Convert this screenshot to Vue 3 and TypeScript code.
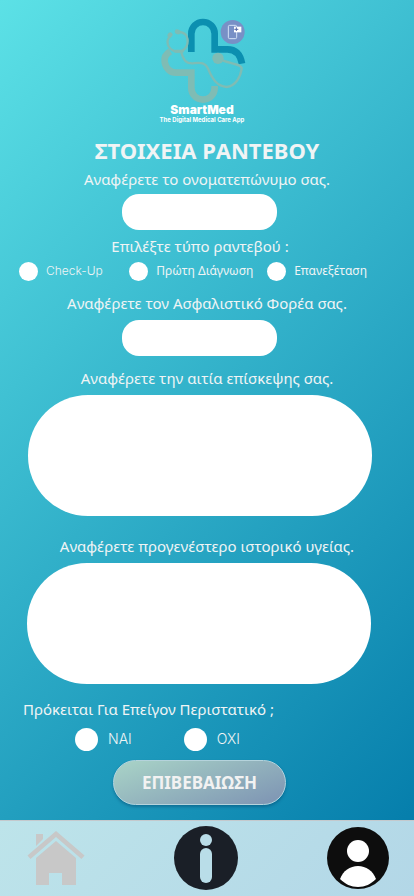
<script setup lang="ts">
import { ref } from 'vue'

const visitTypes: string[] = ['Check-Up', 'Πρώτη Διάγνωση', 'Επανεξέταση']
const answers: string[] = ['ΝΑΙ', 'ΟΧΙ']

const fullName = ref('')
const insurer = ref('')
const reason = ref('')
const history = ref('')
const visitType = ref('')
const urgent = ref('')
</script>

<template>
  <div class="page">
    <main class="content">
      <div class="brand">
        <svg class="logo" viewBox="39 30 270 258" fill="none" aria-hidden="true">
          <path d="M142 132V77a35 35 0 0 1 70 0v47h38c24 0 39 14 44 43" stroke="#0b8fb0" stroke-width="20" />
          <path d="M79 130C65 138 60 150 62 162c3 19 17 32 34 32h46v46a35 35 0 0 0 70 0v-6" stroke="#7fbcb4" stroke-width="20" />
          <g stroke="#7fbcb4" stroke-linecap="round">
            <path d="M77 86C66 98 68 122 94 130h18c20-10 24-34 13-50-6-6-14-8-22-8" stroke-width="7" />
            <path d="M77 82l2-2M99 71l4 1" stroke-width="14" />
            <path d="M95 130h20" stroke-width="9" />
            <path d="M112 134c8 26 16 33 35 32 22-2 36-5 46 18 12 29 26 51 55 53 27-3 42-31 45-55 0-15-37-14-71-30" stroke-width="7" />
          </g>
          <circle cx="222" cy="151" r="17" fill="#7fbcb4" />
          <circle cx="266" cy="72" r="36" fill="#7890c6" />
          <rect x="253" y="52" width="25" height="40" rx="4" stroke="#d5e2f7" stroke-width="3" />
          <path d="M270 56h22v17h-22z" fill="#fff" />
          <path d="M277 58v11M271 64h12" stroke="#5367a8" stroke-width="3" />
        </svg>
        <strong class="brand-name">SmartMed</strong>
        <span class="tagline">The Digital Medical Care App</span>
      </div>
      <h1>ΣΤΟΙΧΕΙΑ ΡΑΝΤΕΒΟΥ</h1>
      <form class="form" @submit.prevent>
        <label class="caption" for="name">Αναφέρετε το ονοματεπώνυμο σας.</label>
        <input id="name" v-model="fullName" class="field" type="text" />
        <fieldset class="group visit">
          <legend class="caption">Επιλέξτε τύπο ραντεβού :</legend>
          <div class="visit-options">
            <label v-for="type in visitTypes" :key="type" class="option">
              <input v-model="visitType" type="radio" name="visit" :value="type" />{{ type }}
            </label>
          </div>
        </fieldset>
        <label class="caption" for="insurer">Αναφέρετε τον Ασφαλιστικό Φορέα σας.</label>
        <input id="insurer" v-model="insurer" class="field insurer" type="text" />
        <label class="caption" for="reason">Αναφέρετε την αιτία επίσκεψης σας.</label>
        <textarea id="reason" v-model="reason" class="area reason"></textarea>
        <label class="caption" for="history">Αναφέρετε προγενέστερο ιστορικό υγείας.</label>
        <textarea id="history" v-model="history" class="area"></textarea>
        <fieldset class="group urgent">
          <legend class="caption">Πρόκειται Για Επείγον Περιστατικό ;</legend>
          <div class="urgent-options">
            <label v-for="answer in answers" :key="answer" class="option large">
              <input v-model="urgent" type="radio" name="urgent" :value="answer" />{{ answer }}
            </label>
          </div>
        </fieldset>
        <button class="submit" type="submit">ΕΠΙΒΕΒΑΙΩΣΗ</button>
      </form>
    </main>
    <nav class="tabs">
      <a href="#home" aria-label="Αρχική">
        <svg class="home" viewBox="0 0 58 56" fill="#c8c8c8">
          <path d="M9 4h7v5l-7 7zM29 1l28.500 24.500-3 3.500L29 7 3.500 29l-3-3.500z" />
          <path d="M29 11l20 17v27H35V43H22v12H9V28z" />
        </svg>
      </a>
      <a href="#info" aria-label="Πληροφορίες">
        <svg class="info" viewBox="0 0 64 64">
          <circle cx="32" cy="32" r="32" fill="#1a1f27" />
          <circle cx="32" cy="14" r="6" fill="#b9dde8" />
          <rect x="26" y="22" width="12" height="35" rx="6" fill="#b9dde8" />
        </svg>
      </a>
      <a href="#profile" aria-label="Προφίλ">
        <svg class="profile" viewBox="0 0 62 62">
          <circle cx="31" cy="31" r="31" fill="#0d0d0d" />
          <circle cx="31" cy="24" r="11" fill="#fff" />
          <path d="M13 52c3-8 10-13 18-13s15 5 18 13c-5 5-11 8-18 8s-13-3-18-8z" fill="#fff" />
        </svg>
      </a>
    </nav>
  </div>
</template>

<style>
body {
  margin: 0;
}
</style>

<style scoped>
.page {
  min-height: 100vh;
  display: flex;
  flex-direction: column;
  box-sizing: border-box;
  background: linear-gradient(135deg, #5ce1e6, #0078a8);
  color: #f0f4f5;
  font-family: 'Noto Sans', sans-serif;
}
.content {
  flex: 1;
  padding: 18px 0 14px;
}
.brand {
  display: flex;
  flex-direction: column;
  align-items: center;
  margin-right: 10px;
  font-family: Inter, sans-serif;
  font-weight: 700;
  color: #fff;
}
.logo {
  width: 90px;
  height: 86px;
}
.brand-name {
  font-size: 12px;
  line-height: 12px;
}
.tagline {
  font-size: 6px;
  line-height: 8px;
}
h1 {
  margin: 12px 0 5px;
  font-size: 22px;
  line-height: 28px;
  font-weight: 700;
  text-align: center;
}
.form {
  display: flex;
  flex-direction: column;
  align-items: center;
}
.caption {
  padding: 0;
  font-size: 15px;
  line-height: 20px;
  font-weight: 400;
  text-align: center;
}
.field,
.area {
  box-sizing: border-box;
  border: 0;
  background: #fff;
  font: inherit;
  color: #17364a;
}
.field {
  width: 155px;
  height: 36px;
  margin: 5px 15px 6px 0;
  padding: 0 16px;
  border-radius: 17px;
}
.insurer {
  margin: 7px 15px 12px 0;
}
.area {
  width: calc(100% - 70px);
  height: 121px;
  margin: 7px 16px 15px 0;
  padding: 24px 32px;
  border-radius: 60px;
  resize: none;
}
.reason {
  margin: 7px 14px 20px 0;
}
.group {
  width: 100%;
  margin: 0;
  padding: 0;
  border: 0;
  min-width: 0;
  box-sizing: border-box;
}
.visit {
  margin-bottom: 12px;
}
.visit legend {
  margin: 0 auto;
  padding-right: 14px;
}
.visit-options {
  display: grid;
  grid-template-columns: 4fr 5fr 5fr;
  padding: 5px 9px 0 19px;
}
.option {
  display: flex;
  align-items: center;
  gap: 8px;
  font-family: Inter, 'Noto Sans', sans-serif;
  font-size: 12px;
  line-height: 20px;
  font-weight: 300;
  white-space: nowrap;
}
.visit .option:not(:first-child) {
  font-family: 'Noto Sans', sans-serif;
  font-weight: 400;
}
.option input {
  appearance: none;
  flex: none;
  width: 19px;
  height: 19px;
  margin: 0;
  border-radius: 50%;
  background: #fff;
}
.option input:checked {
  border: 6px solid #fff;
  background: #0b8fb0;
}
.urgent {
  padding-left: 23px;
}
.urgent legend {
  text-align: left;
}
.urgent-options {
  display: flex;
  gap: 52px;
  padding: 8px 0 0 52px;
}
.large {
  gap: 10px;
  font-size: 14px;
  line-height: 24px;
}
.large input {
  width: 23px;
  height: 23px;
}
.submit {
  width: 173px;
  height: 45px;
  margin: 9px 15px 0 0;
  padding: 0;
  border: 1px solid #b5d3dc;
  border-radius: 23px;
  background: linear-gradient(160deg, #a9d4c7, #7d93b3);
  box-shadow: 0 2px 3px rgba(0, 50, 90, 0.35);
  color: #f2f2f2;
  font: 700 17px 'Noto Sans', sans-serif;
}
.tabs {
  display: flex;
  justify-content: space-between;
  align-items: center;
  box-sizing: border-box;
  height: 76px;
  padding: 0 25px 2px 27px;
  border-top: 1px solid #c4c9cd;
  background: linear-gradient(135deg, #bde4ea, #b3d7e7);
}
.tabs a,
.tabs svg {
  display: block;
}
.home {
  width: 58px;
  height: 56px;
}
.info {
  width: 64px;
  height: 64px;
}
.profile {
  width: 62px;
  height: 62px;
}
</style>
